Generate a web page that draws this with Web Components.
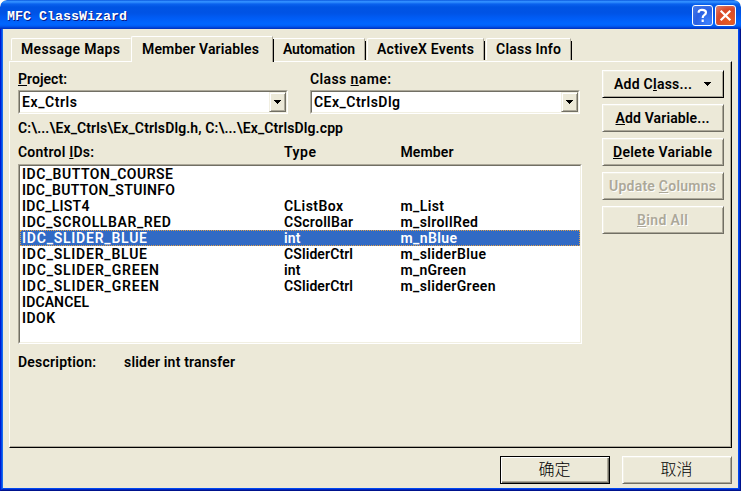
<!DOCTYPE html>
<html lang="zh-CN"><head><meta charset="utf-8"><title>MFC ClassWizard</title>
<style>
html,body{margin:0;width:741px;height:491px;overflow:hidden;background:#fff}
</style></head><body>
<wizard-window></wizard-window>
<script>
const define = (name, html, setup) => {
  const tpl = document.createElement('template');
  tpl.innerHTML = html;
  customElements.define(name, class extends HTMLElement {
    constructor(){ super(); this.attachShadow({mode:'open'}).append(tpl.content.cloneNode(true)); }
    connectedCallback(){ if (setup) setup(this, this.shadowRoot); }
  });
};

// Label whose tracking is adjusted so that it occupies w pixels.
define('ui-text', `<style>
:host{display:block;white-space:pre;font:600 14px/16px Roboto,"Liberation Sans",sans-serif;height:16px}
span{display:inline-block}
::slotted(u){text-decoration:underline;text-decoration-thickness:1px;text-underline-offset:1px;text-decoration-skip-ink:none}
</style><span><slot></slot></span>`, (el, root) => {
  const s = root.querySelector('span'), w = +el.getAttribute('w');
  if (!w) return;
  const n = el.textContent.length;
  const sp = (w - s.getBoundingClientRect().width) / Math.max(1, n - 1);
  s.style.letterSpacing = sp + 'px';
  s.style.marginRight = -sp + 'px';
});

define('caption-button', `<style>
:host{display:block;box-sizing:border-box;width:21px;height:21px;border:1px solid #fff;border-radius:3px;background:radial-gradient(circle at 80% 85%,#3c80ff,#2a60e2 55%,#4a7ce8);box-shadow:inset 0 0 1px #5f8cf0}
:host([kind=close]){background:radial-gradient(circle at 75% 85%,#e85c20,#d94a2a 60%,#e8836b)}
svg{display:block;width:19px;height:19px}
#x{display:none}:host([kind=close]) #x{display:inline}:host([kind=close]) #q{display:none}
</style><svg viewBox="0 0 19 19" fill="none" stroke="#fff" stroke-width="2.2">
<g id="q"><path d="M5.7 6.8V5.7Q6.2 3.9 9 3.9Q13 3.9 13 6.5Q13 8 11.2 9.1Q9.7 10 9.7 12"/><path d="M9.7 13.6V16"/></g>
<path id="x" d="M4.7 4.7l9.6 9.6M14.3 4.7l-9.6 9.6"/></svg>`);

define('title-bar', `<style>
:host{display:flex;box-sizing:border-box;height:29px;padding:5px 5px 0 7px;justify-content:space-between;border-radius:7px 7px 0 0;
background:linear-gradient(#0048d2 0,#2e8bff 1px,#3290ff 2px,#0a62ee 4px,#0054e3 7px,#0053e5 13px,#005cf5 18px,#0066ff 24px,#005df5 26px,#003dd0 28px,#0030ba 29px)}
b{font:bold 13.33px/23px "Liberation Mono",monospace;color:#fff;text-shadow:1px 1px #0a1883;white-space:pre}
div{display:flex;gap:2px}
</style><b><slot></slot></b><div><caption-button></caption-button><caption-button kind="close"></caption-button></div>`);

define('tab-item', `<style>
:host{display:block;box-sizing:border-box;height:22px;border:solid;border-width:1px 1px 0;border-color:#fff #aca899 #fff #fff;border-top-left-radius:2px;padding:2px 0 0 9px;position:relative;margin-top:2px}
:host::after{content:"";position:absolute;right:-2px;top:2px;bottom:0;width:1px;background:#000}
:host([flush])::after{display:none}:host([flush]){border-right-color:transparent}
:host([active]){height:26px;margin-top:0;padding:4px 0 0 10px;background:#ece9d8;z-index:1}
</style><slot></slot>`);

define('combo-box', `<style>
:host{display:flex;box-sizing:border-box;height:24px;width:270px;border:1px solid;border-color:#aca899 #fff #fff #aca899;background:#fff}
.in{flex:1;display:flex;border:1px solid;border-color:#716f64 #f1efe2 #f1efe2 #716f64}
.t{flex:1;padding:2px 0 0 2px}
i{box-sizing:border-box;width:17px;height:20px;background:#ece9d8;border:1px solid;border-color:#f1efe2 #716f64 #716f64 #f1efe2;box-shadow:inset 1px 1px #fff,inset -1px -1px #aca899;display:flex;align-items:center;justify-content:center}
svg{width:7px;height:4px;display:block}
</style><div class="in"><div class="t"><slot></slot></div><i><svg viewBox="0 0 7 4" shape-rendering="crispEdges"><path d="M0 0h7v1H6v1H5v1H4v1H3V3H2V2H1V1H0z"/></svg></i></div>`);

define('push-button', `<style>
:host{display:flex;box-sizing:border-box;height:28px;align-items:center;justify-content:center;border:1px solid;border-color:#fff #716f64 #716f64 #fff;box-shadow:inset 1px 1px #f1efe2,inset -1px -1px #aca899;padding:0 1px 1px 0;background:#ece9d8;gap:12px}
:host([drop]){border-color:#fff #000 #000 #fff}
:host([main]){border-color:#000;box-shadow:inset 1px 1px #fff,inset -1px -1px #716f64,inset -2px -2px #aca899}
:host([disabled]){color:#aca899;text-shadow:1px 1px #fff}
svg{display:none;width:7px;height:4px}:host([drop]) svg{display:block}
</style><slot></slot><svg viewBox="0 0 7 4" shape-rendering="crispEdges"><path d="M0 0h7v1H6v1H5v1H4v1H3V3H2V2H1V1H0z"/></svg>`);

define('list-row', `<style>
:host{display:grid;box-sizing:border-box;height:16px;grid-template-columns:262px 116.5px 1fr;padding-left:2px}
:host([selected]){background:#316ac5;color:#fff;outline:1px dotted #e0a04a;outline-offset:-1px}
</style><slot></slot>`);

define('variable-list', `<style>
:host{display:block;box-sizing:border-box;width:564px;height:180px;background:#fff;border:1px solid;border-color:#aca899 #fff #fff #aca899}
div{box-sizing:border-box;height:178px;border:1px solid;border-color:#716f64 #f1efe2 #f1efe2 #716f64}
</style><div></div>`, (el, root) => {
  const rows = [
    ['IDC_BUTTON_COURSE',151],['IDC_BUTTON_STUINFO',153],
    ['IDC_LIST4',67.5,'CListBox',59,'m_List',43.5],
    ['IDC_SCROLLBAR_RED',149,'CScrollBar',69,'m_slrollRed',77.5],
    ['IDC_SLIDER_BLUE',125,'int',16.5,'m_nBlue',56.5],
    ['IDC_SLIDER_BLUE',125,'CSliderCtrl',69,'m_sliderBlue',85.5],
    ['IDC_SLIDER_GREEN',137,'int',16.5,'m_nGreen',65.5],
    ['IDC_SLIDER_GREEN',137,'CSliderCtrl',69,'m_sliderGreen',95],
    ['IDCANCEL',67],['IDOK',33]];
  root.querySelector('div').innerHTML = rows.map((r, i) =>
    `<list-row ${i === 4 ? 'selected' : ''}>` +
    [0,2,4].filter(k => r[k]).map(k => `<ui-text w="${r[k+1]}">${r[k]}</ui-text>`).join('') + '</list-row>').join('');
});

define('wizard-window', `<style>
:host{display:flex;flex-direction:column;width:741px;height:491px;background:#ece9d8;border-radius:7px 7px 0 0;color:#000;overflow:hidden}
.client{box-sizing:border-box;height:462px;border:3px solid;border-top:0;border-color:#0046e8 #0032cc #0024c0 #0046e8;padding:7px 5px 0 6px;position:relative;background:#ece9d8}
.client::before{content:"";position:absolute;inset:0 -3px -3px -3px;border:1px solid;border-top:0;border-color:#0019cf #00138c #00138c #0019cf}
.client::after{content:"";position:absolute;inset:0 -1px -1px -1px;border:1px solid;border-top:0;border-color:#166aee #0048f0 #0048f0 #166aee}
.tabs{display:grid;grid-template-columns:120px 142px 92px 118px 88px;padding-left:2px;height:25px;align-items:start}
.tabs :nth-child(4){margin-left:2px;margin-right:-1px}
.tabs :nth-child(5){margin-left:3px}
.panel{box-sizing:border-box;height:387px;width:723px;border:1px solid;border-color:#fff #000 #000 #fff;box-shadow:inset -1px -1px #aca899;display:grid;grid-template-columns:564px 122px;column-gap:20px;padding:9px 0 0 8px;align-content:start}
.top{display:grid;grid-template-columns:270px 270px;column-gap:22px;row-gap:3px}
.path{margin-top:6px}
.heads{display:grid;grid-template-columns:266px 116.5px 1fr;margin:8px 0 4px}
.side{display:flex;flex-direction:column;gap:6px;margin-top:-1px}
.desc{display:flex;gap:28px;margin-top:10px}
.foot{display:grid;grid-template-columns:110px 110px;gap:12px;justify-content:end;margin:8px 1px 0 0}
.foot push-button{font:300 16px/20px "Noto Sans CJK SC",sans-serif;padding-bottom:4px}
</style>
<title-bar>MFC ClassWizard</title-bar>
<div class="client">
 <div class="tabs">
  <tab-item flush><ui-text w="99">Message Maps</ui-text></tab-item>
  <tab-item active><ui-text w="117">Member Variables</ui-text></tab-item>
  <tab-item><ui-text w="72">Automation</ui-text></tab-item>
  <tab-item><ui-text w="97">ActiveX Events</ui-text></tab-item>
  <tab-item><ui-text w="65">Class Info</ui-text></tab-item>
 </div>
 <div class="panel">
  <div>
   <div class="top">
    <ui-text w="49"><u>P</u>roject:</ui-text><ui-text w="81">Class <u>n</u>ame:</ui-text>
    <combo-box><ui-text w="55">Ex_Ctrls</ui-text></combo-box><combo-box><ui-text w="86">CEx_CtrlsDlg</ui-text></combo-box>
   </div>
   <ui-text class="path" w="325">C:\\...\\Ex_Ctrls\\Ex_CtrlsDlg.h, C:\\...\\Ex_CtrlsDlg.cpp</ui-text>
   <div class="heads"><ui-text w="76">Control <u>I</u>Ds:</ui-text><ui-text w="32">Type</ui-text><ui-text w="53">Member</ui-text></div>
   <variable-list></variable-list>
   <div class="desc"><ui-text w="78">Description:</ui-text><ui-text w="111">slider int transfer</ui-text></div>
  </div>
  <div class="side">
   <push-button drop><ui-text w="78">Add C<u>l</u>ass...</ui-text></push-button>
   <push-button><ui-text w="94"><u>A</u>dd Variable...</ui-text></push-button>
   <push-button><ui-text w="99"><u>D</u>elete Variable</ui-text></push-button>
   <push-button disabled><ui-text w="107">Update <u>C</u>olumns</ui-text></push-button>
   <push-button disabled><ui-text w="51"><u>B</u>ind All</ui-text></push-button>
  </div>
 </div>
 <div class="foot"><push-button main>确定</push-button><push-button>取消</push-button></div>
</div>`);
</script></body></html>
